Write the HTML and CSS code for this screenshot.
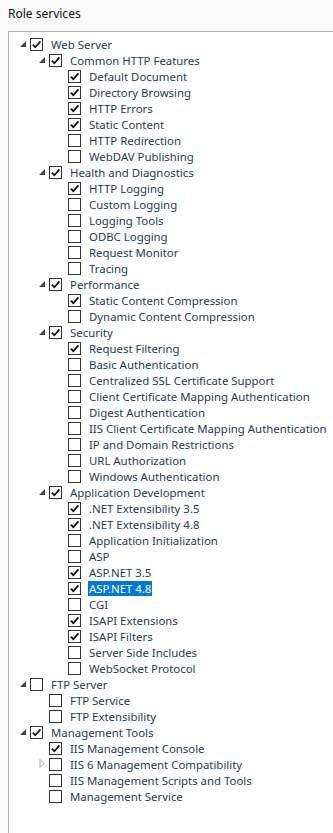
FILE: index.html
```html
<!DOCTYPE html>
<html lang="en">
<head>
    <meta charset="UTF-8">
    <meta name="viewport" content="width=device-width, initial-scale=1.0">
    <title>Role services</title>
    <link rel="stylesheet" href="styles.css">
</head>
<body>
    <div class="panel">
        <h2 class="panel-title">Role services</h2>
        <div class="tree-box">
            <ul class="tree" id="tree"></ul>
        </div>
    </div>

    <script>
        // [level, label, checked, expander, selected]  expander: "open", "closed" or ""
        const items = [
            [0, "Web Server", true, "open"],
            [1, "Common HTTP Features", true, "open"],
            [2, "Default Document", true, ""],
            [2, "Directory Browsing", true, ""],
            [2, "HTTP Errors", true, ""],
            [2, "Static Content", true, ""],
            [2, "HTTP Redirection", false, ""],
            [2, "WebDAV Publishing", false, ""],
            [1, "Health and Diagnostics", true, "open"],
            [2, "HTTP Logging", true, ""],
            [2, "Custom Logging", false, ""],
            [2, "Logging Tools", false, ""],
            [2, "ODBC Logging", false, ""],
            [2, "Request Monitor", false, ""],
            [2, "Tracing", false, ""],
            [1, "Performance", true, "open"],
            [2, "Static Content Compression", true, ""],
            [2, "Dynamic Content Compression", false, ""],
            [1, "Security", true, "open"],
            [2, "Request Filtering", true, ""],
            [2, "Basic Authentication", false, ""],
            [2, "Centralized SSL Certificate Support", false, ""],
            [2, "Client Certificate Mapping Authentication", false, ""],
            [2, "Digest Authentication", false, ""],
            [2, "IIS Client Certificate Mapping Authentication", false, ""],
            [2, "IP and Domain Restrictions", false, ""],
            [2, "URL Authorization", false, ""],
            [2, "Windows Authentication", false, ""],
            [1, "Application Development", true, "open"],
            [2, ".NET Extensibility 3.5", true, ""],
            [2, ".NET Extensibility 4.8", true, ""],
            [2, "Application Initialization", false, ""],
            [2, "ASP", false, ""],
            [2, "ASP.NET 3.5", true, ""],
            [2, "ASP.NET 4.8", true, "", true],
            [2, "CGI", false, ""],
            [2, "ISAPI Extensions", true, ""],
            [2, "ISAPI Filters", true, ""],
            [2, "Server Side Includes", false, ""],
            [2, "WebSocket Protocol", false, ""],
            [0, "FTP Server", false, "open"],
            [1, "FTP Service", false, ""],
            [1, "FTP Extensibility", false, ""],
            [0, "Management Tools", true, "open"],
            [1, "IIS Management Console", true, ""],
            [1, "IIS 6 Management Compatibility", false, "closed"],
            [1, "IIS Management Scripts and Tools", false, ""],
            [1, "Management Service", false, ""]
        ];

        const openArrow = '<svg width="6" height="6" viewBox="0 0 6 6"><polygon points="6,0 6,6 0,6" fill="#444"/></svg>';
        const closedArrow = '<svg width="6" height="9" viewBox="0 0 6 9"><polygon points="1,0.5 5,4.5 1,8.5" fill="none" stroke="#a6a6a6"/></svg>';
        const tick = '<svg width="11" height="11" viewBox="0 0 11 11"><polyline points="1.8,5.6 4.3,8.2 9.4,2.4" fill="none" stroke="#111" stroke-width="1.7"/></svg>';

        const tree = document.getElementById("tree");
        items.forEach(function ([level, label, checked, expander, selected]) {
            const row = document.createElement("li");
            row.className = "tree-row level-" + level;

            const arrow = document.createElement("span");
            arrow.className = "expander";
            if (expander === "open") arrow.innerHTML = openArrow;
            if (expander === "closed") arrow.innerHTML = closedArrow;
            row.appendChild(arrow);

            const box = document.createElement("span");
            box.className = "check";
            if (checked) box.innerHTML = tick;
            row.appendChild(box);

            const text = document.createElement("span");
            text.className = selected ? "label selected" : "label";
            text.textContent = label;
            row.appendChild(text);

            tree.appendChild(row);
        });
    </script>
</body>
</html>
```

FILE: styles.css
```css
body, html {
    margin: 0;
    padding: 0;
    height: 100%;
    background-color: #f9f9f9;
    font-family: "Noto Sans", "Open Sans", Arial, sans-serif;
}

.panel {
    display: flex;
    flex-direction: column;
    height: 100%;
}

.panel-title {
    margin: 0;
    padding: 5px 8px 0 8px;
    height: 26px;
    font-size: 12px;
    font-weight: normal;
    color: #111;
    line-height: 18px;
}

.tree-box {
    flex-grow: 1;
    margin-left: 8px;
    background-color: #fff;
    border-left: 1px solid #acacac;
    border-top: 1px solid #acacac;
    padding-top: 4px;
    overflow: hidden;
}

.tree {
    list-style: none;
    margin: 0;
    padding: 0;
}

.tree-row {
    display: flex;
    align-items: center;
    height: 16px;
    font-size: 11.4px;
    color: #1e395b;
    white-space: nowrap;
}

.level-0 { padding-left: 7px; }
.level-1 { padding-left: 26px; }
.level-2 { padding-left: 45px; }

.expander {
    flex-shrink: 0;
    width: 14px;
    height: 16px;
    display: flex;
    align-items: center;
    justify-content: center;
    padding-bottom: 1px;
    box-sizing: border-box;
}

.check {
    flex-shrink: 0;
    width: 13px;
    height: 13px;
    box-sizing: border-box;
    border: 1px solid #333;
    background-color: #fff;
    display: flex;
    align-items: center;
    justify-content: center;
    margin-right: 7px;
}

.label {
    flex-shrink: 0;
    line-height: 15px;
    padding: 0 1px;
}

.selected {
    background-color: #0078d7;
    color: #fff;
}
```
